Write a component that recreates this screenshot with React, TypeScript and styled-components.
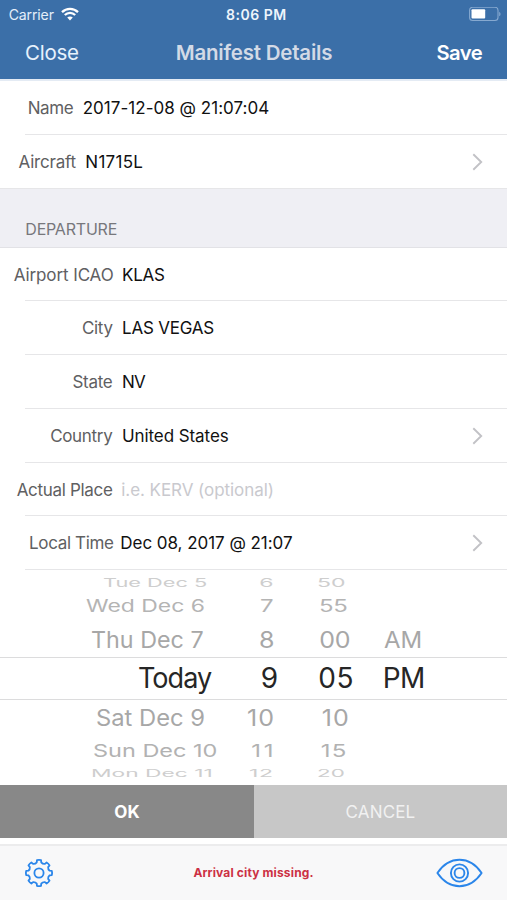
import React from "react";
import styled, { createGlobalStyle } from "styled-components";

const GlobalStyle = createGlobalStyle`
  * { box-sizing: border-box; }
  body { margin: 0; background: #fff; }
`;

const Screen = styled.div`
  width: 507px;
  height: 900px;
  display: flex;
  flex-direction: column;
  overflow: hidden;
  background: #fff;
  color: #111;
  font-family: Inter, "Liberation Sans", sans-serif;
  font-size: 17px;
  white-space: nowrap;
`;

const Text = styled.span<{ $ls?: number }>`
  letter-spacing: ${(p) => p.$ls ?? 0}px;
`;

const Header = styled.header`
  height: 81px;
  flex: none;
  background: #3b6fa8;
  border-bottom: 2px solid #e4ebf4;
`;

const StatusBar = styled.div`
  height: 28px;
  display: grid;
  grid-template-columns: 1fr auto 1fr;
  align-items: center;
  padding: 0 6px 0 8.7px;
  font-size: 14.1px;
  color: #e3eefa;
`;

const Carrier = styled.div`
  display: flex;
  align-items: center;
  gap: 7.5px;
`;

const Clock = styled(Text)`
  padding-left: 3px;
  font-weight: 600;
  font-size: 14px;
  color: #eef5fc;
`;

const BatterySlot = styled.div`
  display: flex;
  justify-content: flex-end;
`;

const NavBar = styled.nav`
  height: 49px;
  display: grid;
  grid-template-columns: 1fr auto 1fr;
  align-items: center;
  padding: 0 25px;
  font-size: 20.5px;
`;

const NavButton = styled.button<{ $strong?: boolean }>`
  border: 0;
  padding: 0;
  background: none;
  font: inherit;
  font-size: ${(p) => (p.$strong ? 20.2 : 20.5)}px;
  font-weight: ${(p) => (p.$strong ? 600 : 400)};
  letter-spacing: ${(p) => (p.$strong ? -0.6 : -0.26)}px;
  color: ${(p) => (p.$strong ? "#fff" : "#e6f2fd")};
  justify-self: ${(p) => (p.$strong ? "end" : "start")};
`;

const Title = styled(Text)`
  padding-left: 1px;
  font-weight: 600;
  color: #d3dae6;
`;

const Section = styled.section`
  flex: none;
`;

const Row = styled.div<{ $last?: boolean }>`
  height: 53.75px;
  display: flex;
  align-items: center;
  background: linear-gradient(#e6e6e8, #e6e6e8) no-repeat ${(p) => (p.$last ? "0" : "25px")} 100% / 100% 1px;
`;

const Label = styled.label<{ $end: number; $ls: number }>`
  width: ${(p) => p.$end}px;
  display: flex;
  justify-content: flex-end;
  letter-spacing: ${(p) => p.$ls}px;
  color: #606062;
`;

const Value = styled.span<{ $gap: number; $ls: number; $hint?: boolean }>`
  flex: 1;
  margin-left: ${(p) => p.$gap}px;
  letter-spacing: ${(p) => p.$ls}px;
  color: ${(p) => (p.$hint ? "#c9c9ce" : "#111")};
`;

const Chevron = styled.svg`
  margin-right: 24px;
`;

const SectionTitle = styled.h2`
  margin: 0;
  height: 59.2px;
  flex: none;
  padding: 22.5px 0 0 25.3px;
  border-bottom: 1px solid #e2e2e6;
  background: #efeff4;
  font-size: 16px;
  line-height: 36px;
  font-weight: 400;
  letter-spacing: -0.21px;
  color: #77777c;
`;

const Picker = styled.div`
  height: 215.3px;
  flex: none;
  display: flex;
  flex-direction: column;
`;

const PickerRow = styled.div<{ $h: number; $top: number; $size: number; $color: string; $selected?: boolean }>`
  height: ${(p) => p.$h}px;
  margin-top: ${(p) => p.$top}px;
  flex: none;
  display: grid;
  grid-template-columns: 150px 70px 60px 1fr;
  padding-left: 85px;
  align-items: center;
  line-height: 0;
  font-size: ${(p) => p.$size}px;
  color: ${(p) => p.$color};
  border: solid #dcdcdd;
  border-width: ${(p) => (p.$selected ? "1px 0" : "0")};
`;

const Cell = styled.span<{ $in: number; $ls?: number; $sx?: number; $sy: number }>`
  margin-left: ${(p) => p.$in}px;
  letter-spacing: ${(p) => p.$ls ?? 0}px;
  transform: translateY(0.4px) scale(${(p) => p.$sx ?? 1}, ${(p) => p.$sy});
  transform-origin: 0 50%;
  justify-self: start;
`;

const Actions = styled.div`
  height: 53px;
  flex: none;
  display: grid;
  grid-template-columns: 254px 1fr;
`;

const Action = styled.button<{ $primary?: boolean }>`
  border: 0;
  padding: 0;
  font: inherit;
  font-weight: ${(p) => (p.$primary ? 700 : 400)};
  letter-spacing: 0.15px;
  background: ${(p) => (p.$primary ? "#888" : "#c7c7c7")};
  color: ${(p) => (p.$primary ? "#fff" : "#f1f1f1")};
`;

const Toolbar = styled.footer`
  margin-top: 6px;
  flex: 1;
  display: grid;
  grid-template-columns: 1fr auto 1fr;
  align-items: center;
  padding: 0 24px 1px;
  border-top: 2px solid #ececed;
  background: #f8f8f9;
`;

const IconButton = styled.button<{ $end?: boolean }>`
  display: flex;
  border: 0;
  padding: 0;
  background: none;
  color: #2b86ea;
  justify-self: ${(p) => (p.$end ? "end" : "start")};
`;

const Alert = styled(Text)`
  font-size: 12px;
  font-weight: 700;
  color: #cc3044;
`;

type Field = {
  label: string;
  value: string;
  end: number;
  gap: number;
  lls: number;
  vls: number;
  link?: boolean;
  hint?: boolean;
};

const flight: Field[] = [
  { label: "Name", value: "2017-12-08 @ 21:07:04", end: 73.2, gap: 9.5, lls: -0.4, vls: 0.03 },
  { label: "Aircraft", value: "N1715L", end: 75.8, gap: 9.5, lls: -0.22, vls: 0.28, link: true },
];

const departure: Field[] = [
  { label: "Airport ICAO", value: "KLAS", end: 113.6, gap: 8.4, lls: -0.09, vls: -0.25 },
  { label: "City", value: "LAS VEGAS", end: 112.6, gap: 9.4, lls: -0.34, vls: -0.21 },
  { label: "State", value: "NV", end: 112.5, gap: 9.5, lls: -0.27, vls: -0.9 },
  { label: "Country", value: "United States", end: 112.4, gap: 9.6, lls: -0.32, vls: -0.08, link: true },
  { label: "Actual Place", value: "i.e. KERV (optional)", end: 112.6, gap: 8.7, lls: -0.31, vls: -0.06, hint: true },
  { label: "Local Time", value: "Dec 08, 2017 @ 21:07", end: 113.6, gap: 6.7, lls: -0.35, vls: -0.04, link: true },
];

/* [text, left edge, letter spacing, horizontal scale] */
type Item = [string, number, number?, number?];
type Wheel = { h: number; top: number; size: number; sy: number; color: string; selected?: boolean; items: Item[] };

const wheel: Wheel[] = [
  { h: 14, top: 6.2, size: 23, sy: 0.5, color: "#cecece", items: [["Tue Dec 5", 102.6, 0, 0.945], ["6", 259.3], ["50", 317]] },
  { h: 22, top: 5, size: 24, sy: 0.71, color: "#b4b4b4", items: [["Wed Dec 6", 86.2, 0, 0.955], ["7", 260], ["55", 319, -0.3]] },
  { h: 28, top: 7.8, size: 25, sy: 0.91, color: "#a7a7a7", items: [["Thu Dec 7", 90.5, 0, 0.932], ["8", 259], ["00", 319.3, -0.3], ["AM", 384.3, 0, 0.96]] },
  { h: 43.5, top: 3.5, size: 28, sy: 1, color: "#262626", selected: true, items: [["Today", 138, -1, 0.965], ["9", 260.7], ["05", 318.3, 0.6], ["PM", 382.7, -0.5]] },
  { h: 28, top: 4, size: 25, sy: 0.89, color: "#a7a7a7", items: [["Sat Dec 9", 95.7, 0, 0.95], ["10", 247, 1.1], ["10", 321.7, 1.2]] },
  { h: 22, top: 7.7, size: 24, sy: 0.74, color: "#b2b2b2", items: [["Sun Dec 10", 93, 0, 0.978], ["11", 251.3, 2.6], ["15", 320.7, 1.4]] },
  { h: 14, top: 4.6, size: 23, sy: 0.45, color: "#cecece", items: [["Mon Dec 11", 90.8, 0, 0.99], ["12", 249, 0.6], ["20", 317, 0, 0.973]] },
];

const columnStart = [85, 235, 305, 365];

const gearPath = (() => {
  const at = (r: number, deg: number) => {
    const a = (deg * Math.PI) / 180;
    return `${(15 + r * Math.sin(a)).toFixed(2)} ${(15 - r * Math.cos(a)).toFixed(2)}`;
  };
  let d = "";
  for (let i = 0; i < 8; i++) {
    const a = i * 45;
    d += `${i ? "L" : "M"}${at(10.9, a - 12)}L${at(13, a - 9)}Q${at(13.4, a)} ${at(13, a + 9)}L${at(10.9, a + 12)}Q${at(9.6, a + 22.5)} ${at(10.9, a + 33)}`;
  }
  return d + "Z";
})();

const WifiIcon = () => (
  <svg width="18" height="14" viewBox="0 0 18 14" fill="none" stroke="#fff" strokeWidth="2.3">
    <path d="M1 5.1C5.5 .7 12.5 .7 17 5.1" />
    <path d="M3.8 8C6.8 5.1 11.2 5.1 14.2 8" />
    <path d="M9 13.4L6.2 10.6C7.8 9.1 10.2 9.1 11.8 10.6Z" fill="#fff" stroke="none" />
  </svg>
);

const BatteryIcon = () => (
  <svg width="32" height="15" viewBox="0 0 32 15">
    <rect x=".6" y=".3" width="28.4" height="13.2" rx="3" fill="none" stroke="#86a9d0" strokeWidth="1.1" />
    <rect x="2.5" y="2.2" width="13.7" height="9.4" rx="1" fill="#fff" />
    <path d="M30.2 4.7C32 5.500 32 8.500 30.2 9.300Z" fill="#86a9d0" />
  </svg>
);

const GearIcon = () => (
  <svg width="30" height="30" viewBox="0 0 30 30" fill="none" stroke="currentColor" strokeWidth="1.8" strokeLinejoin="round">
    <path d={gearPath} />
    <circle cx="15" cy="15" r="4.6" />
  </svg>
);

const EyeIcon = () => (
  <svg width="47" height="30" viewBox="0 0 47 30" fill="none" stroke="currentColor" strokeWidth="1.9" strokeLinejoin="round">
    <path d="M1.4 15C6.5 7.5 14 1.8 23.5 1.8S40.5 7.5 45.6 15C40.5 22.5 33 28.2 23.5 28.2S6.5 22.5 1.4 15Z" />
    <circle cx="23.5" cy="15" r="8.6" />
    <circle cx="23.5" cy="15" r="4.9" />
  </svg>
);

const FieldRow = ({ field, last }: { field: Field; last?: boolean }) => (
  <Row $last={last}>
    <Label $end={field.end} $ls={field.lls}>{field.label}</Label>
    <Value $gap={field.gap} $ls={field.vls} $hint={field.hint}>{field.value}</Value>
    {field.link && (
      <Chevron width="11" height="18" viewBox="0 0 11 18" fill="none" stroke="#c2c2c6" strokeWidth="1.9">
        <path d="M1.3 1.3L9.2 9L1.3 16.7" />
      </Chevron>
    )}
  </Row>
);

export default function App() {
  return (
    <Screen>
      <GlobalStyle />
      <Header>
        <StatusBar>
          <Carrier>
            <Text $ls={-0.15}>Carrier</Text>
            <WifiIcon />
          </Carrier>
          <Clock $ls={0.5}>8:06 PM</Clock>
          <BatterySlot><BatteryIcon /></BatterySlot>
        </StatusBar>
        <NavBar>
          <NavButton>Close</NavButton>
          <Title $ls={-0.21}>Manifest Details</Title>
          <NavButton $strong>Save</NavButton>
        </NavBar>
      </Header>
      <Section>
        {flight.map((f, i) => <FieldRow key={f.label} field={f} last={i === 1} />)}
      </Section>
      <SectionTitle>DEPARTURE</SectionTitle>
      <Section>
        {departure.map((f) => <FieldRow key={f.label} field={f} />)}
      </Section>
      <Picker>
        {wheel.map((w, i) => (
          <PickerRow key={i} $h={w.h} $top={w.top} $size={w.size} $color={w.color} $selected={w.selected}>
            {w.items.map(([text, x, ls, sx], c) => (
              <Cell key={c} $in={x - columnStart[c]} $ls={ls} $sx={sx} $sy={w.sy}>{text}</Cell>
            ))}
          </PickerRow>
        ))}
      </Picker>
      <Actions>
        <Action $primary>OK</Action>
        <Action>CANCEL</Action>
      </Actions>
      <Toolbar>
        <IconButton aria-label="Settings"><GearIcon /></IconButton>
        <Alert $ls={0.14}>Arrival city missing.</Alert>
        <IconButton $end aria-label="Preview"><EyeIcon /></IconButton>
      </Toolbar>
    </Screen>
  );
}
